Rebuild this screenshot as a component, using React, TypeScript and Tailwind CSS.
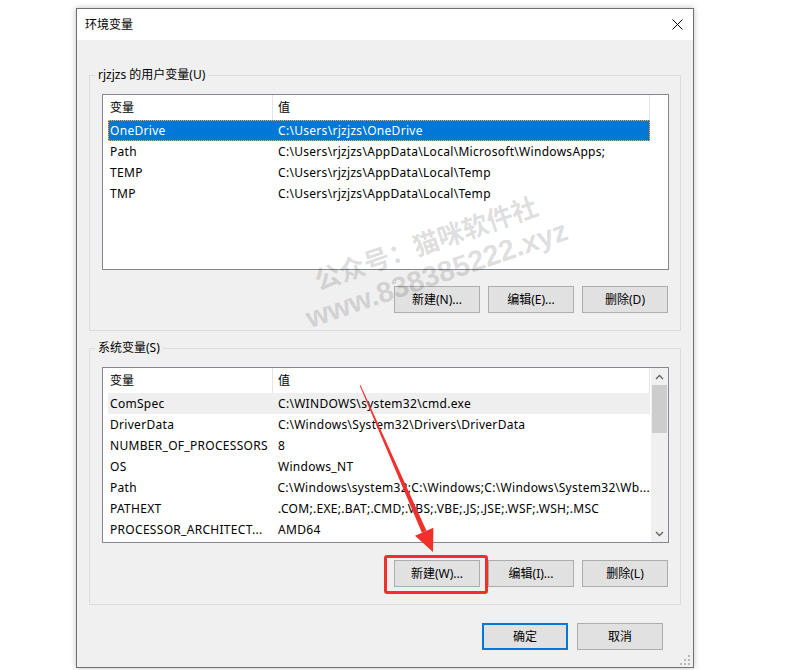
import React from "react";

const userVars: [string, string][] = [
  ["OneDrive", "C:\\Users\\rjzjzs\\OneDrive"],
  ["Path", "C:\\Users\\rjzjzs\\AppData\\Local\\Microsoft\\WindowsApps;"],
  ["TEMP", "C:\\Users\\rjzjzs\\AppData\\Local\\Temp"],
  ["TMP", "C:\\Users\\rjzjzs\\AppData\\Local\\Temp"],
];

const sysVars: [string, string][] = [
  ["ComSpec", "C:\\WINDOWS\\system32\\cmd.exe"],
  ["DriverData", "C:\\Windows\\System32\\Drivers\\DriverData"],
  ["NUMBER_OF_PROCESSORS", "8"],
  ["OS", "Windows_NT"],
  ["Path", "C:\\Windows\\system32;C:\\Windows;C:\\Windows\\System32\\Wb..."],
  ["PATHEXT", ".COM;.EXE;.BAT;.CMD;.VBS;.VBE;.JS;.JSE;.WSF;.WSH;.MSC"],
  ["PROCESSOR_ARCHITECT...", "AMD64"],
];

function WinButton({ label, primary }: { label: string; primary?: boolean }) {
  return (
    <button
      className={
        "w-[86px] h-[27px] bg-[#e1e1e1] text-[12px] leading-none text-black " +
        (primary ? "border-2 border-[#0078d7]" : "border border-[#adadad]")
      }
    >
      {label}
    </button>
  );
}

function VarList({
  rows,
  selected,
  hover,
  scroll,
}: {
  rows: [string, string][];
  selected?: number;
  hover?: number;
  scroll?: boolean;
}) {
  return (
    <div className="ml-[7px] w-[567px] h-[176px] border border-[#828790] bg-white flex overflow-hidden">
      <div className="flex-1 flex flex-col">
        {/* header */}
        <div className="flex h-[25px] leading-[25px] shrink-0">
          <div className="w-[170px] pl-[7px] border-r border-[#e5e5e5]">变量</div>
          <div className="w-[377px] pl-[5px] border-r border-[#e5e5e5]">值</div>
        </div>
        {rows.map(([k, v], i) => (
          <div
            key={k + i}
            className={
              "ml-[5px] flex h-[21px] leading-[21px] w-[542px] shrink-0 whitespace-nowrap tracking-[0.3px] " +
              (i === selected
                ? "bg-[#0078d7] text-white outline outline-1 outline-dotted outline-[#e9b96e] -outline-offset-1"
                : i === hover
                ? "bg-[#efefef]"
                : "")
            }
          >
            <div className="w-[164px] pl-[2px] overflow-hidden">{k}</div>
            <div className="pl-[6px]">{v}</div>
          </div>
        ))}
      </div>
      {scroll && (
        <div className="w-[17px] bg-[#f0f0f0] flex flex-col">
          <div className="h-[17px] flex items-center justify-center">
            <svg width="9" height="6" viewBox="0 0 9 6">
              <polyline points="1,5 4.5,1.5 8,5" fill="none" stroke="#606060" strokeWidth="1.3" />
            </svg>
          </div>
          <div className="mx-[1px] h-[48px] bg-[#cdcdcd]" />
          <div className="flex-1" />
          <div className="h-[17px] flex items-center justify-center">
            <svg width="9" height="6" viewBox="0 0 9 6">
              <polyline points="1,1 4.5,4.5 8,1" fill="none" stroke="#606060" strokeWidth="1.3" />
            </svg>
          </div>
        </div>
      )}
    </div>
  );
}

export default function App() {
  return (
    <div className="relative w-[792px] h-[670px] overflow-hidden bg-white pl-[76px] pt-[8px] font-['Noto_Sans','Noto_Sans_CJK_SC',sans-serif] text-[12px] text-black">
      <div className="relative w-[618px] h-[660px] border border-[#707070] bg-[#f0f0f0] flex flex-col shadow-[0_0_6px_rgba(0,0,0,0.25)]">
        {/* Title bar */}
        <div className="h-[31px] bg-white flex items-center justify-between pl-[8px] pr-[10px] shrink-0">
          <span>环境变量</span>
          <svg width="11" height="11" viewBox="0 0 11 11">
            <path d="M0.5 0.5 L10.5 10.5 M10.5 0.5 L0.5 10.5" stroke="#000" strokeWidth="1" />
          </svg>
        </div>

        <div className="flex flex-col px-[12px]">
          {/* User variables */}
          <fieldset className="mt-[27px] border border-[#dcdcdc] pl-[5px] pt-[11px] pb-[17px]">
            <legend className="px-[3px] leading-[16px]">rjzjzs 的用户变量(U)</legend>
            <VarList rows={userVars} selected={0} />
            <div className="mt-[16px] flex justify-end gap-[8px] pr-[12px]">
              <WinButton label="新建(N)..." />
              <WinButton label="编辑(E)..." />
              <WinButton label="删除(D)" />
            </div>
          </fieldset>

          {/* System variables */}
          <fieldset className="mt-[9px] border border-[#dcdcdc] pl-[5px] pt-[11px] pb-[17px]">
            <legend className="px-[3px] leading-[16px]">系统变量(S)</legend>
            <VarList rows={sysVars} hover={0} scroll />
            <div className="mt-[17px] flex justify-end gap-[8px] pr-[12px]">
              <div className="relative">
                <WinButton label="新建(W)..." />
                <div className="absolute left-[-10px] right-[-8px] top-[-5px] bottom-[-7px] border-[3px] border-[#f2302b] rounded-[3px]" />
              </div>
              <WinButton label="编辑(I)..." />
              <WinButton label="删除(L)" />
            </div>
          </fieldset>

          {/* OK / Cancel */}
          <div className="mt-[18px] flex justify-end gap-[9px] pr-[18px]">
            <WinButton label="确定" primary />
            <WinButton label="取消" />
          </div>
        </div>

        {/* size grip */}
        <svg className="absolute right-[3px] bottom-[2px]" width="10" height="10" viewBox="0 0 10 10">
          <g fill="#b8b8b8">
            <rect x="8" y="0" width="2" height="2" />
            <rect x="4" y="4" width="2" height="2" />
            <rect x="8" y="4" width="2" height="2" />
            <rect x="0" y="8" width="2" height="2" />
            <rect x="4" y="8" width="2" height="2" />
            <rect x="8" y="8" width="2" height="2" />
          </g>
        </svg>
      </div>

      {/* watermark */}
      <div className="pointer-events-none absolute left-[431px] top-[258px] -translate-x-1/2 -translate-y-1/2 rotate-[-19deg] flex flex-col items-center whitespace-nowrap text-black/15 font-bold">
        <div className="text-[26px] leading-[34px] font-['Noto_Sans_CJK_SC',sans-serif]">公众号：猫咪软件社</div>
        <div className="text-[29px] leading-[34px] font-['Liberation_Sans',sans-serif]">www.838385222.xyz</div>
      </div>

      {/* red arrow */}
      <svg className="pointer-events-none absolute left-0 top-0" width="792" height="670" viewBox="0 0 792 670">
        <polygon points="359.6,385.2 360.4,384.8 426.5,530.8 421.9,532.8" fill="#f2302b" />
        <polygon points="433.4,527.8 415,535.8 433,552" fill="#f2302b" />
      </svg>
    </div>
  );
}
